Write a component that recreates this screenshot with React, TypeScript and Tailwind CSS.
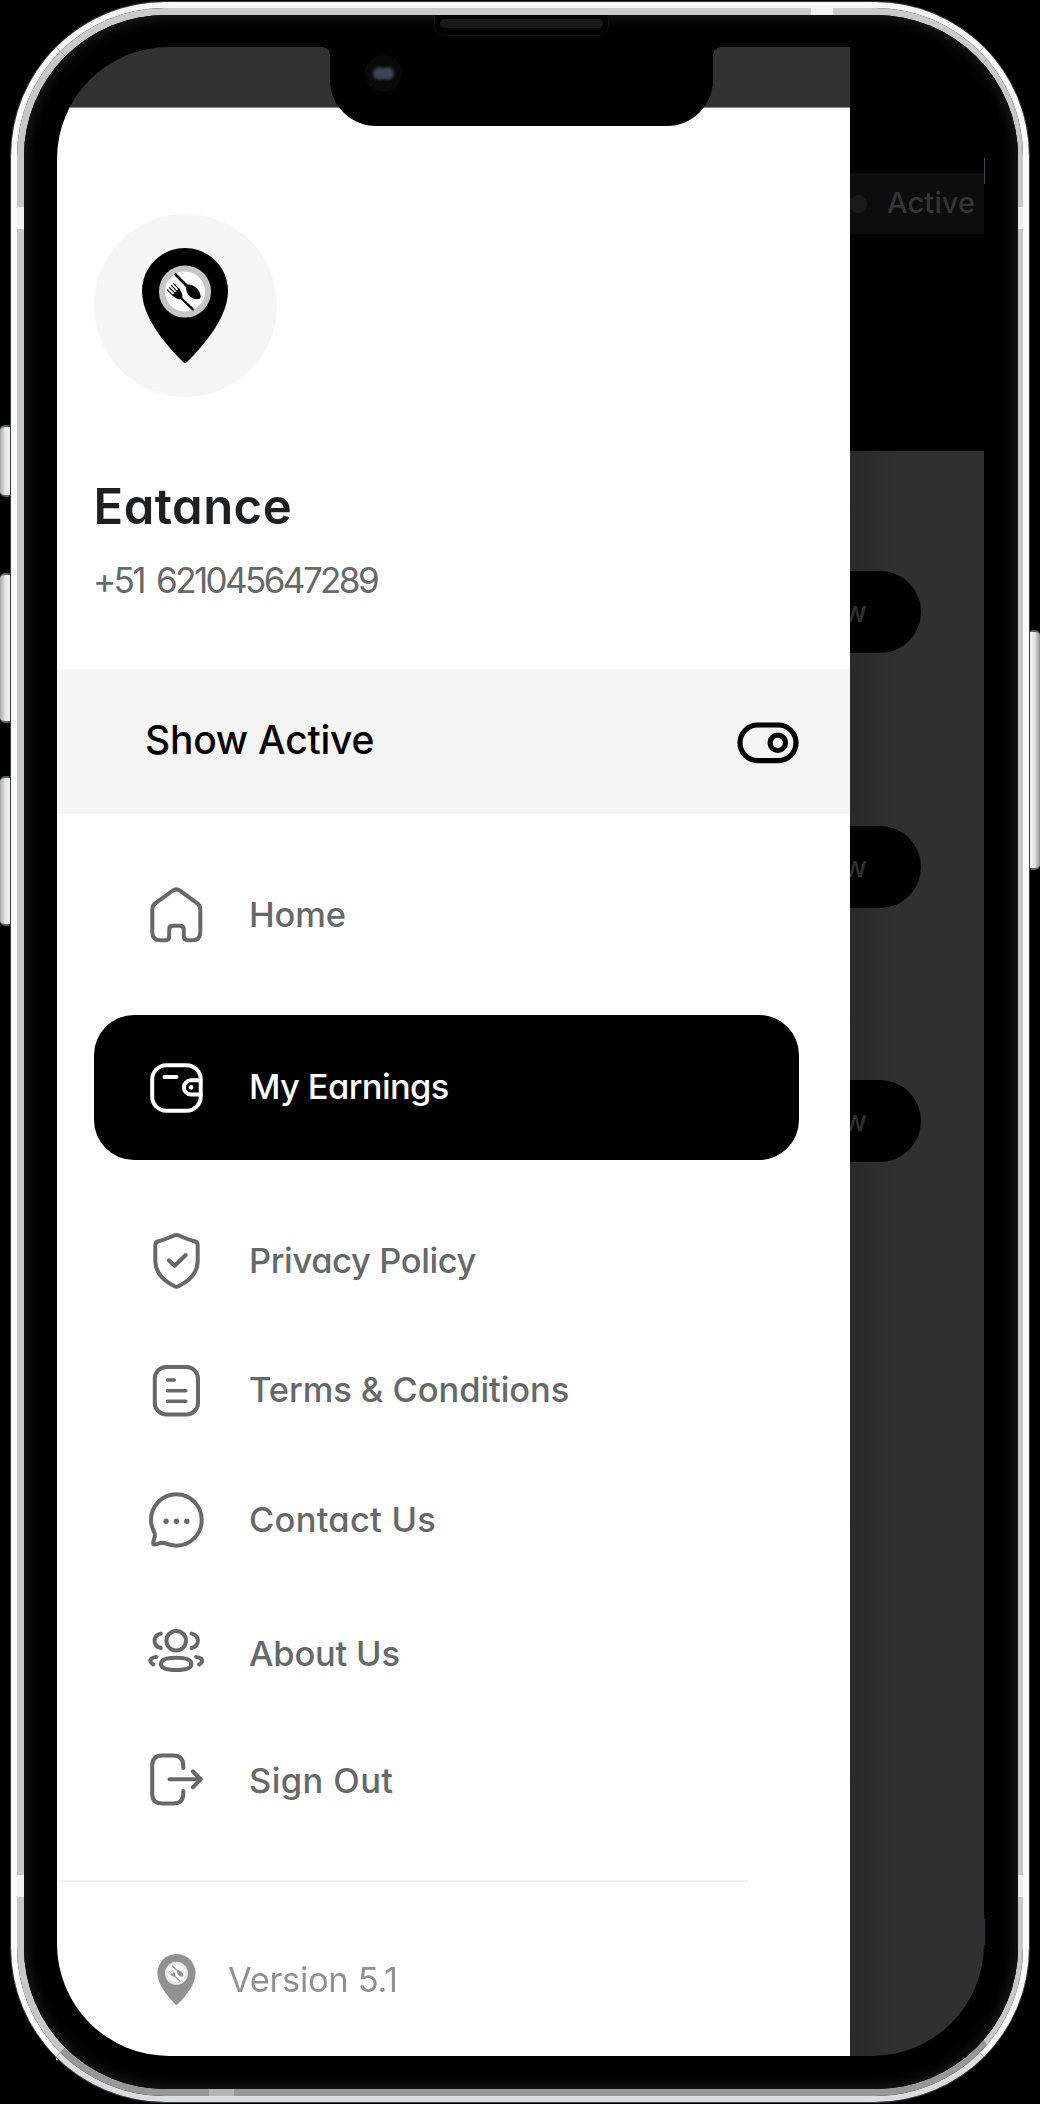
import React from 'react';

type IconProps = { children: React.ReactNode };

function Icon({ children }: IconProps) {
  return (
    <svg
      viewBox="0 0 64 64"
      className="size-16 shrink-0"
      fill="none"
      stroke="currentColor"
      strokeWidth="4"
      strokeLinecap="round"
      strokeLinejoin="round"
    >
      {children}
    </svg>
  );
}

const HomeIcon = () => (
  <Icon>
    <path d="M28.7 8.7 11.6 21.2Q8.3 23.6 8.3 27.5V50Q8.3 58.3 16.6 58.3H21.5Q25.2 58.3 25.2 54.6V47.5Q25.2 43.7 29 43.7H36Q39.8 43.7 39.8 47.5V54.6Q39.8 58.3 43.5 58.3H48Q56.3 58.3 56.3 50V27.5Q56.3 23.6 53 21.2L35.9 8.7Q32.3 6 28.7 8.7Z" />
  </Icon>
);

const WalletIcon = () => (
  <Icon>
    <rect x="8.2" y="9.3" width="48.5" height="45.4" rx="14" />
    <path d="M20.5 21H32.5" />
    <path d="M56.5 24.3H47a7.1 7.1 0 0 0 0 14.2h9.5" />
    <circle cx="47" cy="31.4" r="2.3" fill="currentColor" stroke="none" />
  </Icon>
);

const ShieldIcon = () => (
  <Icon>
    <path d="M11.3 16.2Q11.3 13.4 13.8 12.5Q24 9.3 29.5 6.7Q32.5 5.2 35.5 6.7Q41 9.3 51.2 12.5Q53.7 13.4 53.7 16.2V32C53.7 43.5 46 51.5 34.5 57.2Q32.5 58.3 30.5 57.2C19 51.5 11.3 43.5 11.3 32Z" />
    <path d="M24.7 31.3 30.7 36.8 41.7 26" />
  </Icon>
);

const DocumentIcon = () => (
  <Icon>
    <rect x="10.8" y="8" width="43.2" height="47.4" rx="11.5" />
    <path d="M23.5 21H30.2M23.5 31.7H41.8M23.5 42.3H41.8" strokeWidth="3.6" />
  </Icon>
);

const ChatIcon = () => (
  <Icon>
    <path d="M32.4 6.3C46.5 6.3 57.7 17.7 57.7 32C57.7 46.3 46.5 57.7 32.4 57.7C28 57.7 24.8 56.8 21.5 55.4C19 54.3 17 54.5 14.5 55.5C12 56.6 9 57.7 9.3 54.5C9.6 51 11.8 48.5 10.6 45.2C9.3 42.3 7 38.5 7 32C7 17.7 18.3 6.3 32.4 6.3Z" />
    <g fill="currentColor" stroke="none">
      <circle cx="22.1" cy="33.2" r="2.7" />
      <circle cx="32.4" cy="33.2" r="2.7" />
      <circle cx="42.8" cy="33.2" r="2.7" />
    </g>
  </Icon>
);

const PeopleIcon = () => (
  <Icon>
    <circle cx="32.2" cy="22.7" r="9.8" />
    <path d="M32.2 39.7C40 39.7 47.4 41 47.4 45.9S40 52 32.2 52S17 50.8 17 45.9S24.4 39.7 32.2 39.7Z" />
    <path d="M16.8 15.6C8.5 17.5 8.5 28 16.8 30M47.6 15.6C55.9 17.5 55.9 28 47.6 30" />
    <path d="M12.3 38.9C5.5 40 4.5 43.5 9.3 46.5M52.1 38.9C58.9 40 59.9 43.5 55.1 46.5" />
  </Icon>
);

const SignOutIcon = () => (
  <Icon>
    <path d="M39.3 20V18C39.3 11 36 7.5 29.5 7.5H18C11.5 7.5 8.2 11 8.2 18V45.5C8.2 52.5 11.5 55.5 18 55.5H29.5C36 55.5 39.3 52.5 39.3 45.5V43" />
    <path d="M25.5 31.3H56.5M48.8 23.3 56.8 31.3 48.8 39.3" />
  </Icon>
);

function Pin({ className }: { className: string }) {
  return (
    <svg viewBox="0 0 86 115" className={className}>
      <path
        fill="#000"
        d="M43 0C66.7 0 86 19.3 86 43C86 67 66 93 45 114Q43 116 41 114C20 93 0 67 0 43C0 19.3 19.3 0 43 0Z"
      />
      <circle cx="43" cy="43.5" r="23" fill="#fff" stroke="#c6c6c6" strokeWidth="6" />
      <g stroke="#000" strokeLinecap="round" fill="#000">
        <path d="M33.5 26.5 45 38" strokeWidth="2.6" />
        <path
          stroke="none"
          d="M43.5 37.5C46 35.5 51 36.5 54.5 40C58.5 44 59.5 49 58 50.5C55 52.5 50 50.5 47 47.5C44 44 44.5 41 43.5 37.5Z"
        />
        <path
          d="M31.5 35.5 37.5 41.5M29.5 37.6 35.5 43.6M27.4 39.7 33.4 45.7M25.3 41.8 31.3 47.8"
          strokeWidth="1.1"
        />
        <path stroke="none" d="M30.5 47 37 40.5C40 44 40.8 47 40.3 49.7L38.6 51.2C36 51.5 33 50 30.5 47Z" />
        <path d="M38.5 49.5 51 61.5" strokeWidth="2.4" />
      </g>
    </svg>
  );
}

const ToggleIcon = () => (
  <svg viewBox="0 0 62 42" className="mt-[3px] h-[42px] w-[62px]" fill="none" stroke="#000" strokeWidth="5.2">
    <rect x="3" y="3" width="56" height="35.6" rx="17.8" />
    <circle cx="40.8" cy="20.8" r="7.7" />
  </svg>
);

const menu = [
  { label: 'Home', icon: <HomeIcon />, row: 'mt-[68px]', text: '-ml-px pt-px tracking-[-0.15px]' },
  {
    label: 'My Earnings',
    icon: <WalletIcon />,
    row: 'mt-[69px]',
    text: '-ml-px pb-px tracking-[-0.65px]',
    active: true,
  },
  { label: 'Privacy Policy', icon: <ShieldIcon />, row: 'mt-[69px]', text: '-ml-px pb-px tracking-[-0.4px]' },
  { label: 'Terms & Conditions', icon: <DocumentIcon />, row: 'mt-[66px]', text: 'pb-[3px] tracking-[-0.07px]' },
  { label: 'Contact Us', icon: <ChatIcon />, row: 'mt-[65px]', text: 'pb-px tracking-[0.25px]' },
  { label: 'About Us', icon: <PeopleIcon />, row: 'mt-[66px]', text: 'pt-2 tracking-[-0.2px]' },
  { label: 'Sign Out', icon: <SignOutIcon />, row: 'mt-[66px]', text: 'pt-[2px] tracking-[0.4px]' },
];

function Drawer() {
  return (
    <div className="flex w-[793px] flex-col border-t border-[#8a8a8a] bg-white">
      <div className="mt-[106px] ml-[36.5px] flex size-[183px] items-center justify-center rounded-full bg-[#f5f5f5]">
        <Pin className="h-[115px] w-[86px]" />
      </div>
      <h1 className="mt-20 ml-[36.5px] text-[49px] leading-[60px] font-[570] tracking-[0.5px] text-[#1e1f20]">
        Eatance
      </h1>
      <p className="mt-[22px] ml-9 text-[35px] leading-[42px] tracking-[-2.6px] text-[#66686a] [word-spacing:5px]">
        +51 621045647289
      </p>

      <div className="mt-[68px] flex h-[145px] items-center justify-between bg-[#f5f5f5] pr-[51px] pl-[88px]">
        <span className="pb-[3px] text-[39px] font-[550] tracking-[-0.25px] text-black">Show Active</span>
        <ToggleIcon />
      </div>

      <nav className="flex flex-col">
        {menu.map((item) => (
          <div
            key={item.label}
            className={`${item.row} ${
              item.active
                ? 'mx-[36.5px] h-[145px] w-[705px] rounded-[40px] bg-black pl-[50.5px] text-white'
                : 'h-16 pl-[87px] text-[#66686a]'
            } flex items-center`}
          >
            {item.icon}
            <span className={`ml-[41px] text-[34.5px] font-[550] ${item.text}`}>{item.label}</span>
          </div>
        ))}
      </nav>

      <div className="mt-[68px] h-[2px] w-[691px] bg-[#f3f3f3]" />
      <div className="mt-[72px] ml-[100px] flex items-center opacity-[0.43]">
        <Pin className="h-[51px] w-[39px]" />
        <span className="ml-[32px] text-[34.5px] leading-[51px] tracking-[-0.35px] text-black">Version 5.1</span>
      </div>
    </div>
  );
}

function DimmedPage() {
  return (
    <div className="flex flex-1 flex-col overflow-hidden">
      <div className="h-[404px] pt-[126px]">
        <div className="flex h-[61px] items-center bg-[#0d0d0d]">
          <span className="-ml-px size-[18px] rounded-full bg-[#1b1b1b]" />
          <span className="ml-5 pb-[2px] text-[29px] font-[550] tracking-[0.15px] text-[#343434]">Active</span>
        </div>
      </div>
      <div className="flex flex-1 flex-col gap-[172.5px] bg-linear-to-r from-[#292929] to-[#303030] to-35% pt-[120px]">
        {[0, 1, 2].map((n) => (
          <div
            key={n}
            className="flex h-[82px] w-[71px] items-center justify-end rounded-r-full bg-black pr-[54px] text-[29px] font-[550] text-[#303030]"
          >
            <span>w</span>
          </div>
        ))}
      </div>
    </div>
  );
}

function Notch() {
  return (
    <div className="absolute top-0 left-[265px] flex">
      <span className="h-2 w-2 bg-[radial-gradient(circle_at_0_100%,transparent_7.5px,#000_8px)]" />
      <div className="h-[79px] w-[383px] rounded-b-[46px] bg-black pt-[8px] pl-[35px]">
        <div className="flex size-[37px] items-center justify-center rounded-full bg-[#090909]">
          <span className="size-[13px] rounded-full bg-[#3a4654] blur-[1.5px]" />
          <span className="-ml-[5px] size-[13px] rounded-full bg-[#3a4654] blur-[1.5px]" />
        </div>
      </div>
      <span className="h-2 w-2 bg-[radial-gradient(circle_at_100%_100%,transparent_7.5px,#000_8px)]" />
    </div>
  );
}

const leftKey =
  'absolute left-0 w-[10px] rounded-r-[2px] rounded-l-[5px] border-y-2 border-[#5c5f63] bg-linear-to-r from-[#a8a8a8] via-[#e4e4e4] to-[#f4f4f4]';

export default function App() {
  return (
    <div className="relative h-[2104px] w-[1040px] overflow-hidden bg-black font-['Inter',sans-serif] [font-feature-settings:'cv11']">
      <span className={`${leftKey} top-[425px] h-[72px]`} />
      <span className={`${leftKey} top-[573px] h-[150px]`} />
      <span className={`${leftKey} top-[776px] h-[150px]`} />
      <span className="absolute top-[630px] right-0 h-[240px] w-[10px] rounded-l-[2px] rounded-r-[5px] border-y-2 border-[#5c5f63] bg-linear-to-r from-[#f4f4f4] via-[#e0e0e0] to-[#8f8f8f]" />
      <span className="absolute top-[2056px] left-[56px] h-1 w-1 bg-white" />

      <div className="relative ml-[10px] h-[2103px] w-[1020px] pt-px">
        <div className="h-[2102px] rounded-[155px] border border-[#2f3d4c] bg-black">
          <div className="h-full rounded-[154px] border-6 border-x-[#fbfbfb] border-t-[#f6f6f6] border-b-[#dcdcdc]">
            <div className="h-full rounded-[148px] border-t-[7px] border-r-[5px] border-b-[7px] border-l-[7px] border-x-[#c6c8c8] border-t-[#c9cac9] border-b-[#989898]">
              <div className="h-full rounded-[142px] bg-black pt-8 pl-[33px] shadow-[inset_0_0_13px_3px_#1c1c1c]">
                <div className="relative h-[2009px] w-[927px] overflow-hidden rounded-[112px]">
                  <div className="flex h-full">
                    <div className="flex flex-col">
                      <div className="h-[60px] shrink-0 bg-[#323232]" />
                      <div className="flex flex-1">
                        <Drawer />
                      </div>
                    </div>
                    <DimmedPage />
                  </div>
                  <Notch />
                </div>
              </div>
            </div>
          </div>
        </div>

        <span className="absolute top-[15px] left-[424px] flex h-[21px] w-[175px] justify-center rounded-b-[10px] border border-t-0 border-[#101010] bg-black pt-1">
          <span className="h-[9px] w-[163px] rounded-full bg-[#191919]" />
        </span>
        <span className="absolute top-[8px] left-[801px] h-[7px] w-[22px] bg-[#f1f1f1]" />
        <span className="absolute top-[207px] left-[7px] h-[22px] w-[7px] bg-[#f3f3f3]" />
        <span className="absolute top-[207px] right-[7px] h-[22px] w-[5px] bg-[#ebebeb]" />
        <span className="absolute top-[1875px] left-[7px] h-[22px] w-[7px] bg-[#f3f3f3]" />
        <span className="absolute top-[1875px] right-[7px] h-[22px] w-[5px] bg-[#ebebeb]" />
        <span className="absolute top-[2089px] left-[199px] h-[7px] w-[25px] bg-[#b4b5b3]" />
        <span className="absolute top-[158px] left-[974px] h-[26px] w-px bg-[#33475a]" />
        <span className="absolute top-[1919px] left-[974px] h-[26px] w-px bg-[#24384e]" />
      </div>
    </div>
  );
}
